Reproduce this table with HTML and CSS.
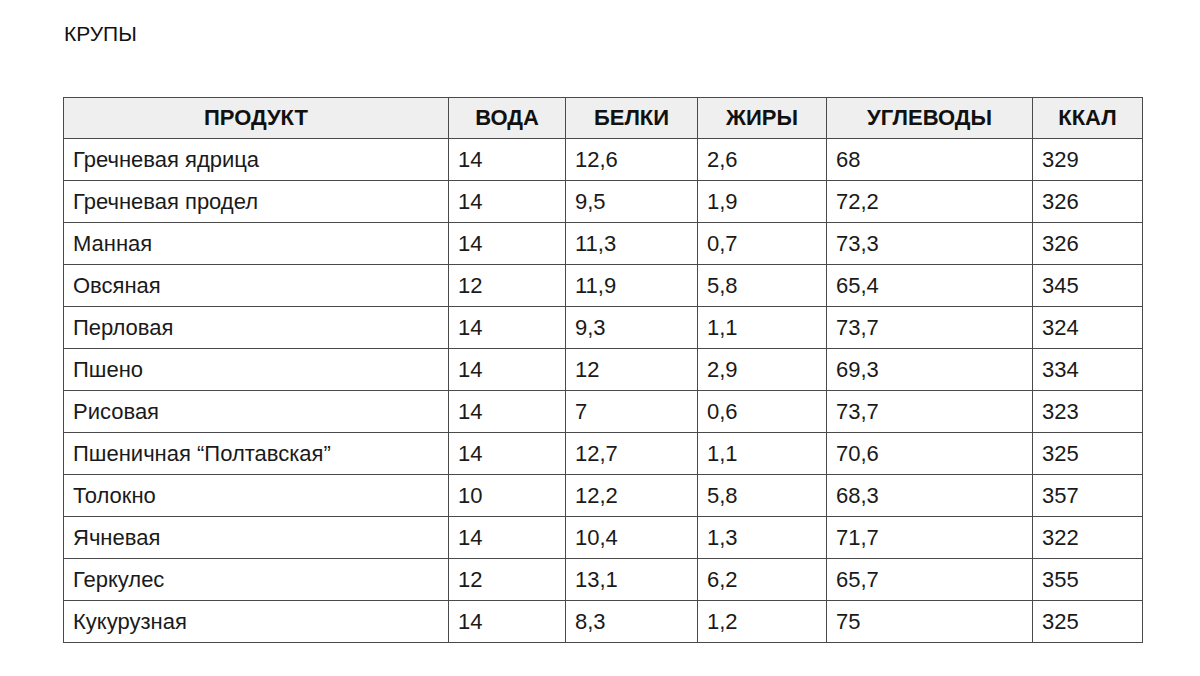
FILE: index.html
```html
<!DOCTYPE html>
<html lang="ru">
<head>
<meta charset="utf-8">
<link rel="stylesheet" href="styles.css">
</head>
<body>
<div class="page">
  <h1 class="title">КРУПЫ</h1>
  <table class="grid">
    <colgroup>
      <col class="c1"><col class="c2"><col class="c3"><col class="c4"><col class="c5"><col class="c6">
    </colgroup>
    <thead>
      <tr><th>ПРОДУКТ</th><th>ВОДА</th><th>БЕЛКИ</th><th>ЖИРЫ</th><th>УГЛЕВОДЫ</th><th>ККАЛ</th></tr>
    </thead>
    <tbody>
      <tr><td>Гречневая ядрица</td><td>14</td><td>12,6</td><td>2,6</td><td>68</td><td>329</td></tr>
      <tr><td>Гречневая продел</td><td>14</td><td>9,5</td><td>1,9</td><td>72,2</td><td>326</td></tr>
      <tr><td>Манная</td><td>14</td><td>11,3</td><td>0,7</td><td>73,3</td><td>326</td></tr>
      <tr><td>Овсяная</td><td>12</td><td>11,9</td><td>5,8</td><td>65,4</td><td>345</td></tr>
      <tr><td>Перловая</td><td>14</td><td>9,3</td><td>1,1</td><td>73,7</td><td>324</td></tr>
      <tr><td>Пшено</td><td>14</td><td>12</td><td>2,9</td><td>69,3</td><td>334</td></tr>
      <tr><td>Рисовая</td><td>14</td><td>7</td><td>0,6</td><td>73,7</td><td>323</td></tr>
      <tr><td>Пшеничная “Полтавская”</td><td>14</td><td>12,7</td><td>1,1</td><td>70,6</td><td>325</td></tr>
      <tr><td>Толокно</td><td>10</td><td>12,2</td><td>5,8</td><td>68,3</td><td>357</td></tr>
      <tr><td>Ячневая</td><td>14</td><td>10,4</td><td>1,3</td><td>71,7</td><td>322</td></tr>
      <tr><td>Геркулес</td><td>12</td><td>13,1</td><td>6,2</td><td>65,7</td><td>355</td></tr>
      <tr><td>Кукурузная</td><td>14</td><td>8,3</td><td>1,2</td><td>75</td><td>325</td></tr>
    </tbody>
  </table>
</div>
</body>
</html>
```
FILE: styles.css
```css
html, body {
  margin: 0;
  padding: 0;
  background: #ffffff;
}
body {
  font-family: "Liberation Sans", Arial, sans-serif;
  color: #1a1a1a;
}
.page {
  padding: 21px 0 0 63px;
}
.title {
  margin: 0 0 0 1px;
  font-size: 21px;
  font-weight: normal;
  line-height: 26px;
  color: #111;
}
.grid {
  margin-top: 50px;
  border-collapse: collapse;
  table-layout: fixed;
  width: 1079px;
  border: 1px solid #4a4a4a;
}
.c1 { width: 385px; }
.c2 { width: 117px; }
.c3 { width: 132px; }
.c4 { width: 129px; }
.c5 { width: 206px; }
.c6 { width: 110px; }
.grid th, .grid td {
  border: 1px solid #4a4a4a;
  height: 41px;
  padding: 0 0 0 9px;
  font-size: 22px;
  text-align: left;
  vertical-align: middle;
}
.grid th {
  height: 40px;
  background: #efefef;
  font-weight: bold;
  text-align: center;
  padding: 0;
  color: #111;
}
```
